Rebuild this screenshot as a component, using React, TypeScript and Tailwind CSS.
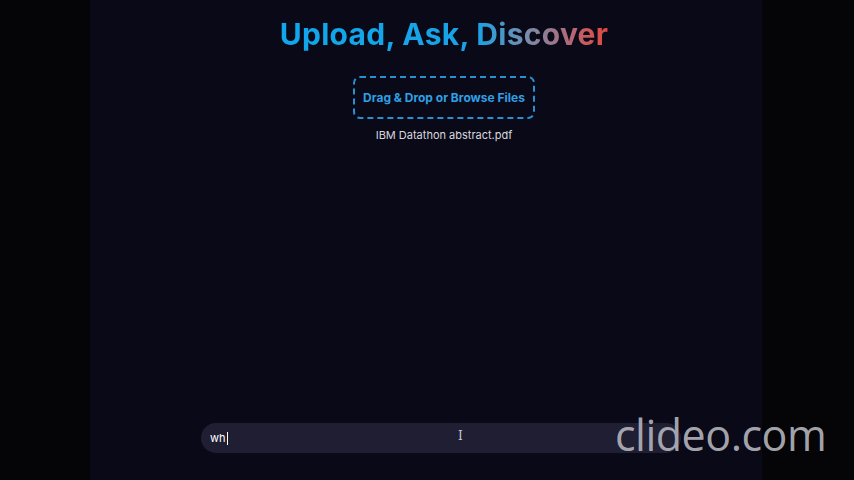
import React from "react";

export default function App() {
  return (
    <div className="relative flex h-[480px] w-[854px] overflow-hidden bg-[#050507]" style={{ fontFamily: "Inter, 'Noto Sans', sans-serif" }}>
      <div className="w-[90px] shrink-0 bg-[#050507]" />
      <main className="flex w-[672px] shrink-0 flex-col bg-[#0a0918]">
        <div className="flex flex-col items-center pl-[36px]">
          <h1 className="mt-[16px] bg-[linear-gradient(90deg,#0fa8ec_0%,#18a3e6_60%,#7d8aa8_76%,#b06a78_88%,#e5473d_100%)] bg-clip-text text-[30px] font-bold leading-[36px] tracking-[0.3px] text-transparent">
            Upload, Ask, Discover
          </h1>
          <div className="mt-[24px] flex h-[43px] w-[182px] items-center justify-center rounded-[7px] border-2 border-dashed border-[#2a8fd0]">
            <span className="text-[12px] font-bold text-[#2ea0e6]">Drag &amp; Drop or Browse Files</span>
          </div>
          <p className="mt-[8px] text-[11px] text-[#d8d8de]">IBM Datathon abstract.pdf</p>
        </div>
        <div className="flex-1" />
        <div className="mb-[27px] flex w-[672px] pl-[111px]">
          <div className="flex h-[30px] w-[480px] items-center rounded-full bg-[#1f1e32] px-[9px]">
            <span className="text-[11px] text-white">wh</span>
            <span className="ml-[1px] h-[13px] w-px bg-white" />
          </div>
        </div>
      </main>
      <div className="w-[92px] shrink-0 bg-[#050507]" />
      <span className="absolute left-[458px] top-[427px] text-[12px] text-[#c8c8d0]" style={{ fontFamily: "'DejaVu Serif', serif" }}>I</span>
      <span className="absolute left-[615px] top-[410px] text-[43px] leading-[50px] tracking-[-0.5px] text-[#b8b8c0]/90" style={{ fontFamily: "'Open Sans', sans-serif" }}>clideo.com</span>
    </div>
  );
}
